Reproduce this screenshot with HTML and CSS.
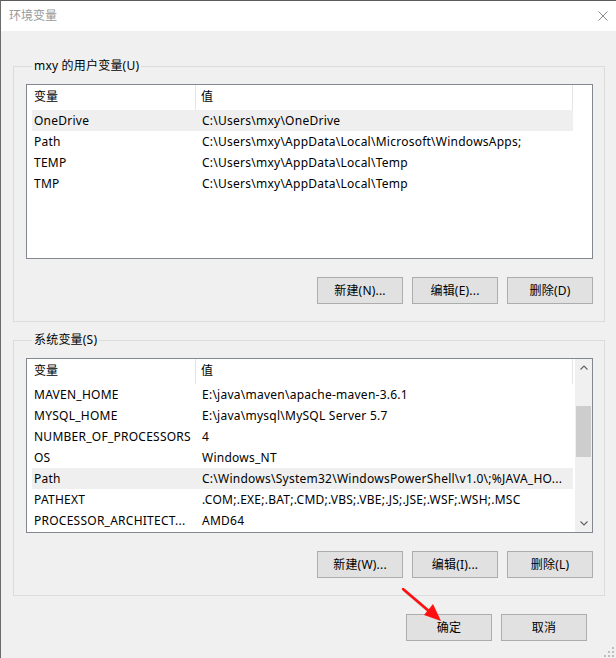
FILE: index.html
```html
<!DOCTYPE html>
<html lang="zh-CN">
<head>
<meta charset="utf-8">
<title>环境变量</title>
<link rel="stylesheet" href="styles.css">
</head>
<body>
<div class="window">
  <div class="titlebar">
    <span class="title">环境变量</span>
    <svg class="close" width="10" height="10" viewBox="0 0 10 10"><path d="M0.5 0.5 L9.5 9.5 M9.5 0.5 L0.5 9.5" stroke="#8a8a8a" stroke-width="1" fill="none"/></svg>
  </div>
  <div class="content">
    <fieldset class="group group-user">
      <legend>mxy 的用户变量(U)</legend>
      <div class="list">
        <div class="list-main">
          <div class="header"><div class="hcell hname">变量</div><div class="hcell hval">值</div></div>
          <div class="row selected"><div class="cname">OneDrive</div><div class="cval">C:\Users\mxy\OneDrive</div></div>
          <div class="row"><div class="cname">Path</div><div class="cval">C:\Users\mxy\AppData\Local\Microsoft\WindowsApps;</div></div>
          <div class="row"><div class="cname">TEMP</div><div class="cval">C:\Users\mxy\AppData\Local\Temp</div></div>
          <div class="row"><div class="cname">TMP</div><div class="cval">C:\Users\mxy\AppData\Local\Temp</div></div>
        </div>
      </div>
      <div class="buttons">
        <button class="btn">新建(N)...</button>
        <button class="btn">编辑(E)...</button>
        <button class="btn">删除(D)</button>
      </div>
    </fieldset>
    <fieldset class="group group-sys">
      <legend>系统变量(S)</legend>
      <div class="list">
        <div class="list-main">
          <div class="header"><div class="hcell hname">变量</div><div class="hcell hval">值</div></div>
          <div class="row"><div class="cname">MAVEN_HOME</div><div class="cval">E:\java\maven\apache-maven-3.6.1</div></div>
          <div class="row"><div class="cname">MYSQL_HOME</div><div class="cval">E:\java\mysql\MySQL Server 5.7</div></div>
          <div class="row"><div class="cname">NUMBER_OF_PROCESSORS</div><div class="cval">4</div></div>
          <div class="row"><div class="cname">OS</div><div class="cval">Windows_NT</div></div>
          <div class="row selected"><div class="cname">Path</div><div class="cval">C:\Windows\System32\WindowsPowerShell\v1.0\;%JAVA_HO...</div></div>
          <div class="row"><div class="cname">PATHEXT</div><div class="cval">.COM;.EXE;.BAT;.CMD;.VBS;.VBE;.JS;.JSE;.WSF;.WSH;.MSC</div></div>
          <div class="row"><div class="cname">PROCESSOR_ARCHITECT...</div><div class="cval">AMD64</div></div>
        </div>
        <div class="scrollbar">
          <div class="sb-btn"><svg width="8" height="5" viewBox="0 0 8 5"><polyline points="0.5,4.5 4,1 7.5,4.5" stroke="#606060" stroke-width="1.1" fill="none"/></svg></div>
          <div class="sb-track"><div class="sb-thumb"></div></div>
          <div class="sb-btn"><svg width="8" height="5" viewBox="0 0 8 5"><polyline points="0.5,0.5 4,4 7.5,0.5" stroke="#606060" stroke-width="1.1" fill="none"/></svg></div>
        </div>
      </div>
      <div class="buttons">
        <button class="btn">新建(W)...</button>
        <button class="btn">编辑(I)...</button>
        <button class="btn">删除(L)</button>
      </div>
    </fieldset>
    <div class="footer">
      <button class="btn">确定</button>
      <button class="btn">取消</button>
    </div>
  </div>
  <svg class="arrow" width="616" height="658" viewBox="0 0 616 658">
    <line x1="404" y1="590" x2="431" y2="613" stroke="#7a1a1a" stroke-opacity="0.25" stroke-width="3" />
    <line x1="403" y1="589" x2="430" y2="612" stroke="#ff1010" stroke-width="2.4" stroke-linecap="round"/>
    <polygon points="441,621 424,615 433,604" fill="#ff1010"/>
  </svg>
  <svg class="grip" width="12" height="12" viewBox="0 0 12 12">
    <rect x="9" y="1" width="2" height="2" fill="#bdbdbd"/>
    <rect x="5" y="5" width="2" height="2" fill="#bdbdbd"/>
    <rect x="9" y="5" width="2" height="2" fill="#bdbdbd"/>
    <rect x="1" y="9" width="2" height="2" fill="#bdbdbd"/>
    <rect x="5" y="9" width="2" height="2" fill="#bdbdbd"/>
    <rect x="9" y="9" width="2" height="2" fill="#bdbdbd"/>
  </svg>
</div>
</body>
</html>
```
FILE: styles.css
```css
* { box-sizing: border-box; }
html, body { margin: 0; padding: 0; }
body {
  width: 616px;
  height: 658px;
  overflow: hidden;
  background: #f0f0f0;
  font-family: "Noto Sans", "Noto Sans CJK SC", sans-serif;
  font-size: 12px;
  color: #000;
}
.window {
  position: relative;
  width: 616px;
  height: 658px;
  border-left: 1px solid #6b6b6b;
  border-top: 1px solid #5c5c5c;
  background: #f0f0f0;
}
.titlebar {
  height: 30px;
  background: #fff;
  display: flex;
  align-items: center;
  justify-content: space-between;
  padding: 0 8px 0 8px;
}
.title {
  color: #999;
  font-size: 12px;
  line-height: 16px;
}
.close { display: block; margin-top: 0; }
.content {
  padding: 0 11px 0 12px;
}
.group {
  margin: 0;
  padding: 10px 11px 17px 12px;
  border: 1px solid #dcdcdc;
  min-width: 0;
}
.group-user { margin-top: 27px; }
.group-sys { margin-top: 10px; }
.group legend {
  padding: 0 2px;
  margin-left: 6px;
  line-height: 16px;
  height: 16px;
  letter-spacing: 0.2px;
}
.list {
  height: 175px;
  border: 1px solid #828790;
  background: #fff;
  display: flex;
  overflow: hidden;
}
.list-main {
  flex: 1;
  min-width: 0;
  overflow: hidden;
}
.header {
  display: flex;
  height: 25px;
}
.hcell {
  line-height: 24px;
  border-right: 1px solid #e5e5e5;
  white-space: nowrap;
}
.hname { width: 169px; padding-left: 7px; }
.hval { width: 377px; padding-left: 5px; }
.row {
  display: flex;
  height: 21px;
  line-height: 21px;
  margin-left: 5px;
  width: 541px;
  white-space: nowrap;
  letter-spacing: 0.25px;
}
.row.selected { background: #efefef; }
.cname { width: 170px; padding-left: 2px; flex: none; overflow: visible; }
.cval { flex: 1; overflow: visible; }
.scrollbar {
  width: 17px;
  flex: none;
  background: #f0f0f0;
  display: flex;
  flex-direction: column;
}
.sb-btn {
  height: 17px;
  display: flex;
  align-items: center;
  justify-content: center;
}
.sb-btn svg { display: block; }
.sb-track { flex: 1; }
.sb-thumb {
  margin: 30px 1px 0 1px;
  height: 51px;
  background: #cdcdcd;
}
.buttons {
  display: flex;
  justify-content: flex-end;
  gap: 9px;
  margin-top: 18px;
}
.btn {
  width: 86px;
  height: 27px;
  margin: 0;
  padding: 0;
  background: #e1e1e1;
  border: 1px solid #adadad;
  border-radius: 0;
  font-family: "Noto Sans", "Noto Sans CJK SC", sans-serif;
  font-size: 12px;
  color: #000;
  line-height: 25px;
  letter-spacing: 0.2px;
}
.footer {
  display: flex;
  justify-content: flex-end;
  gap: 9px;
  margin-top: 18px;
  padding-right: 18px;
}
.arrow {
  position: absolute;
  left: -1px;
  top: -1px;
  pointer-events: none;
}
.grip {
  position: absolute;
  right: 1px;
  bottom: 0px;
}
```
